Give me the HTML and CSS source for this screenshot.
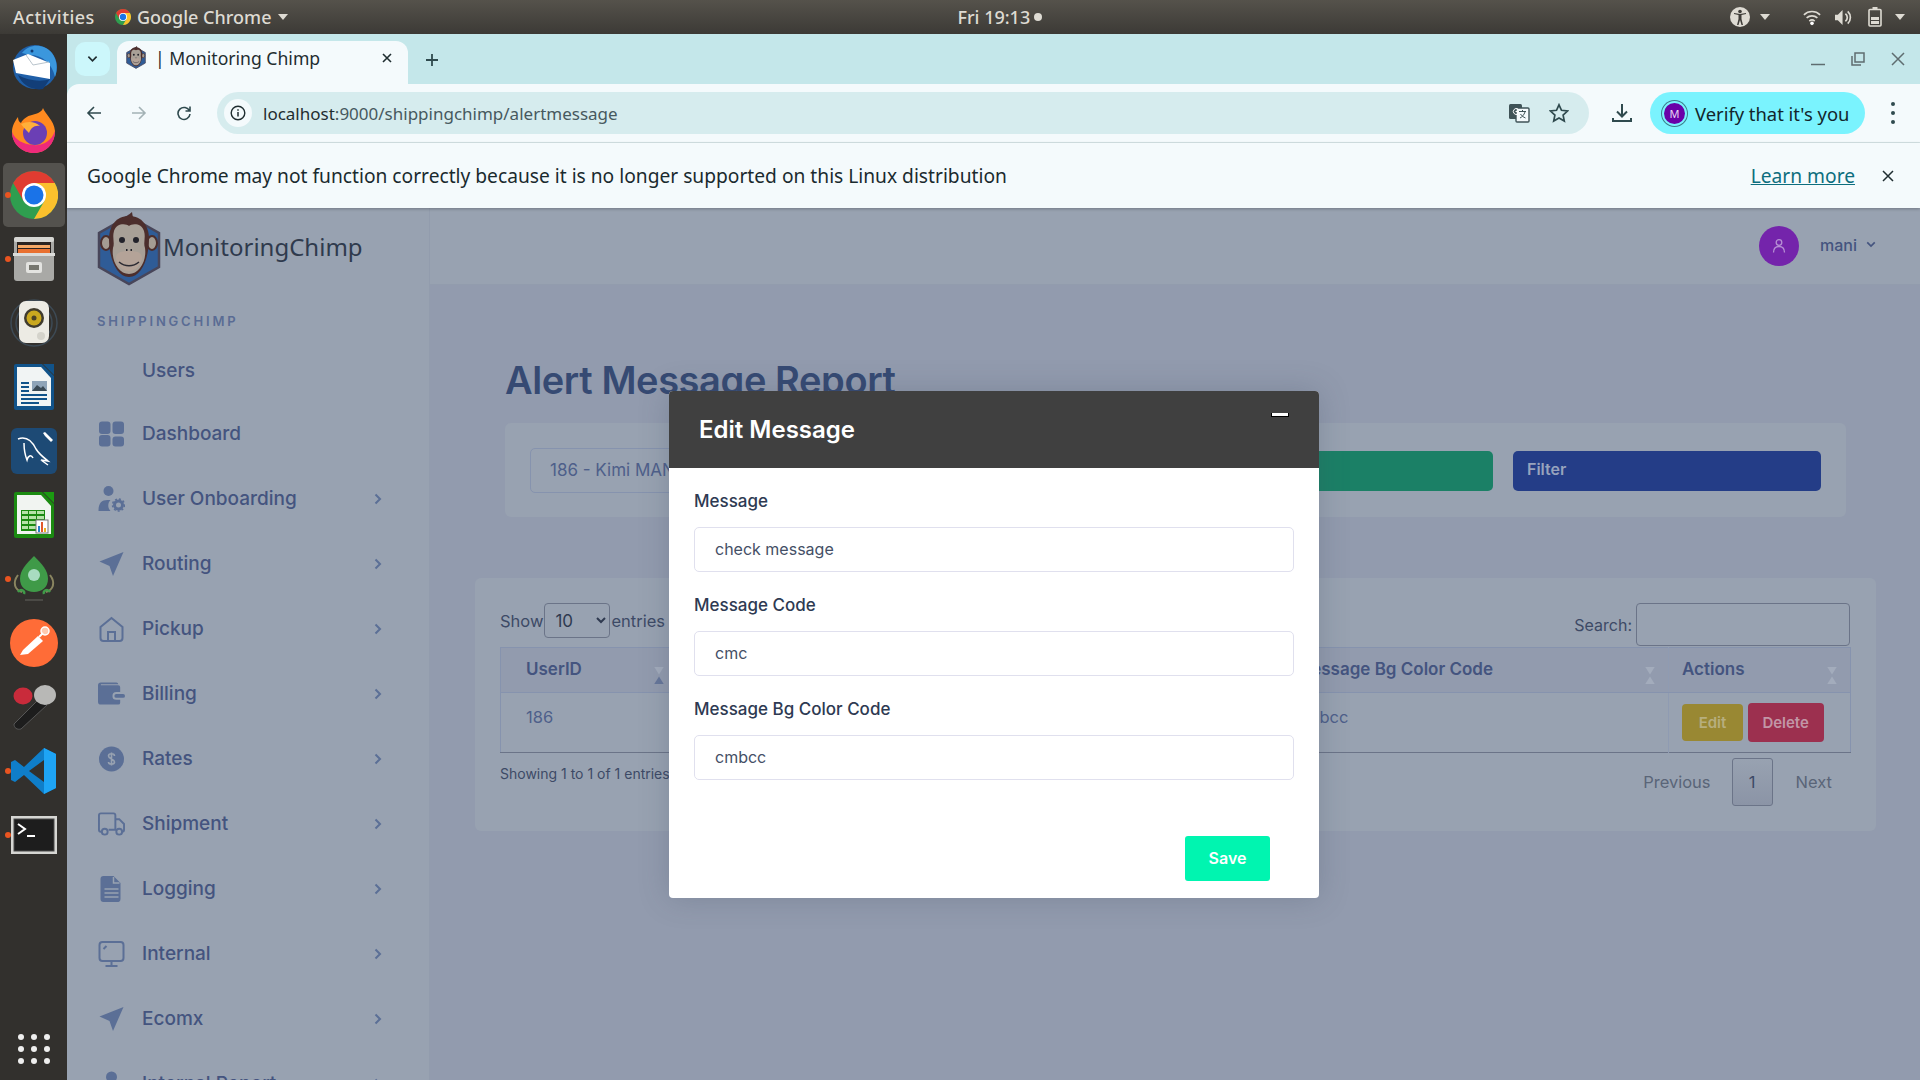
FILE: index.html
```html
<!DOCTYPE html>
<html>
	<head>
		<meta charset="UTF-8">
		<title>| Monitoring Chimp</title>
		<link rel="stylesheet" href="styles.css">
	</head>
	<body>
		<svg class="defs" width="0" height="0">
			<symbol id="chrome" viewBox="0 0 48 48">
				<circle cx="24" cy="24" r="24" fill="#2f9e4f"/>
				<path d="M24 0A24 24 0 0 1 44.8 12L24 24 13.600 30 3.200 12A24 24 0 0 1 24 0Z" fill="#e03c31"/>
				<path d="M44.800 12A24 24 0 0 1 24 48L34.400 30 24 12Z" fill="#fbc02d"/>
				<circle cx="24" cy="24" r="12" fill="#fff"/>
				<circle cx="24" cy="24" r="9.500" fill="#1a73e8"/>
			</symbol>
			<symbol id="chimp" viewBox="0 0 64 74">
				<path d="M32 4 62 21v34L32 72 2 55V21Z" fill="#2f5c97" stroke="#48465a" stroke-width="2.500"/>
				<path d="M29 5l6-5 1 6Z" fill="#4c2e2c"/>
				<ellipse cx="9" cy="31" rx="5" ry="7" fill="#a49c93" stroke="#4c2e2c" stroke-width="2"/>
				<ellipse cx="55" cy="31" rx="5" ry="7" fill="#a49c93" stroke="#4c2e2c" stroke-width="2"/>
				<path d="M32 4c13 0 20 10 20 23 0 18-7 38-20 38S12 45 12 27C12 14 19 4 32 4Z" fill="#4c2e2c"/>
				<path d="M32 14c3-3 13-3 15 5 2 7-1 11 1 17 2 13-6 26-16 26S14 49 16 36c2-6-1-10 1-17 2-8 12-8 15-5Z" fill="#a8a097"/>
				<circle cx="25" cy="28" r="3" fill="#22222a"/>
				<circle cx="39" cy="28" r="3" fill="#22222a"/>
				<path d="M19 46c0-6 6-7 13-7s13 1 13 7-6 13-13 13-13-7-13-13Z" fill="#b4a398"/>
				<path d="M22 50c6 5 14 5 20 0" fill="none" stroke="#2b2b33" stroke-width="1.500"/>
				<path d="M29 38h1.500M33.500 38H35" stroke="#22222a" stroke-width="2"/>
			</symbol>
			<symbol id="plane" viewBox="0 0 26 26">
				<path d="M25 1 1 10.500 11 15l3.500 10Z" fill="#5b6f96"/>
			</symbol>
			<symbol id="chev" viewBox="0 0 8 12">
				<path d="M1.500 1.500 6 6l-4.500 4.500" fill="none" stroke="#5b6f96" stroke-width="2"/>
			</symbol>
			<symbol id="sort" viewBox="0 0 10 18">
				<path d="M0 0h10L5 8Z" fill="#a3acbc"/>
				<path d="M0 18h10L5 10Z" fill="#a3acbc"/>
			</symbol>
			<symbol id="sortup" viewBox="0 0 10 18">
				<path d="M0 0h10L5 8Z" fill="#a3acbc"/>
				<path d="M0 18h10L5 10Z" fill="#66769a"/>
			</symbol>
			<symbol id="caret" viewBox="0 0 10 6">
				<path d="M0 0h10L5 6Z" fill="currentColor"/>
			</symbol>
		</svg>

		<div class="topbar">
			<span class="activities">Activities</span>
			<div class="app-menu">
				<svg class="app-menu-icon"><use href="#chrome"/></svg>
				<span>Google Chrome</span>
				<svg class="caret"><use href="#caret"/></svg>
			</div>
			<div class="clock">Fri 19:13<span class="clock-dot"></span></div>
			<div class="tray">
				<svg class="tray-a11y" viewBox="0 0 20 20"><circle cx="10" cy="10" r="10" fill="#dedbd3"/><circle cx="10" cy="4.500" r="1.800" fill="#3f3d39"/><path d="M4 7l4.500 1v4l-1.500 6h1.500L10 13l1.500 5H13l-1.500-6V8L16 7V6L10 7 4 6Z" fill="#3f3d39"/></svg>
				<svg class="tray-caret"><use href="#caret"/></svg>
				<svg class="tray-wifi" viewBox="0 0 20 18"><path d="M1 6a13 13 0 0 1 18 0M4 9.500a9 9 0 0 1 12 0M7 13a4.500 4.500 0 0 1 6 0" fill="none" stroke="#dedbd3" stroke-width="1.800"/><circle cx="10" cy="15.500" r="2" fill="#fff"/></svg>
				<svg class="tray-vol" viewBox="0 0 20 18"><path d="M1 6h3l5-5v16l-5-5H1Z" fill="#dedbd3"/><path d="M12 5a5 5 0 0 1 0 8M14.500 2.500a9 9 0 0 1 0 13" fill="none" stroke="#dedbd3" stroke-width="1.800"/></svg>
				<svg class="tray-bat" viewBox="0 0 14 20"><path d="M4.500 0h5v2h-5Z" fill="#dedbd3"/><rect x="1" y="2.500" width="12" height="16.500" rx="1" fill="none" stroke="#dedbd3" stroke-width="1.600"/><rect x="3" y="10" width="8" height="3" fill="#dedbd3"/><rect x="3" y="14" width="8" height="3" fill="#dedbd3"/></svg>
				<svg class="tray-caret-end"><use href="#caret"/></svg>
			</div>
		</div>

		<div class="desktop">
			<div class="dock">
				<div class="dock-item">
					<svg viewBox="0 0 48 48"><circle cx="25" cy="24" r="22" fill="#1f5fa8"/><path d="M12 10C20 0 34 1 42 10c5 7 6 16 3 24C42 20 32 12 20 12Z" fill="#3b97dd"/><path d="M3 17l15-6 22 9v16L6 30Z" fill="#fff"/><path d="M16 12l7 10 16-3" fill="none" stroke="#b9c4cc"/><path d="M8 32c10 6 24 7 32 4l-7 10c-10 2-21-4-25-14Z" fill="#123e78"/><circle cx="22" cy="8" r="1.500" fill="#123e78"/></svg>
				</div>
				<div class="dock-item">
					<svg viewBox="0 0 48 48"><path d="M33 1c2 6 11 12 12 23 0 13-10 22-21 22S2 37 2 25c0-6 3-11 6-15 0 3 1 5 3 6 2-4 6-7 11-8 4-1 10-3 11-7Z" fill="#ff8a1f"/><path d="M2 25c0 12 10 21 22 21s21-9 21-22c-4 11-13 15-22 14C13 37 5 33 2 25Z" fill="#ee2a7b"/><circle cx="25" cy="26" r="12" fill="#6b3fb5"/><path d="M11 17c6-3 14-3 19 2-6-1-9 2-11 7-3-3-6-6-8-9Z" fill="#ffb03a"/></svg>
				</div>
				<div class="dock-item is-active">
					<span class="dock-dot"></span>
					<svg viewBox="0 0 48 48"><use href="#chrome"/></svg>
				</div>
				<div class="dock-item">
					<span class="dock-dot"></span>
					<svg viewBox="0 0 48 48"><rect x="4" y="2" width="40" height="44" rx="3" fill="#a9a9a6"/><rect x="4" y="2" width="40" height="5" rx="2" fill="#d6d6d3"/><rect x="7" y="7" width="34" height="11" fill="#2a2320"/><rect x="8" y="10" width="32" height="3" fill="#f4a867"/><rect x="8" y="14" width="32" height="4" fill="#e9702f"/><rect x="3" y="18" width="42" height="3" fill="#dcdcd9"/><rect x="16" y="27" width="16" height="11" rx="2" fill="#e3e3e0"/><rect x="19" y="30" width="10" height="5" fill="#77776f"/></svg>
				</div>
				<div class="dock-item">
					<svg viewBox="0 0 48 48"><circle cx="24" cy="24" r="23" fill="none" stroke="#3d4a55" stroke-width="1.500"/><circle cx="24" cy="24" r="18" fill="none" stroke="#3d4a55" stroke-width="1.500"/><rect x="9" y="2" width="30" height="42" rx="7" fill="#ecebe4"/><circle cx="24" cy="19" r="10" fill="#3f3b2e"/><circle cx="24" cy="19" r="7.500" fill="#c9a81f"/><circle cx="24" cy="19" r="2.500" fill="#4a4226"/><circle cx="31" cy="37" r="4" fill="#d4d3cb"/></svg>
				</div>
				<div class="dock-item">
					<svg viewBox="0 0 48 48"><path d="M6 1h26l12 12v32a2 2 0 0 1-2 2H6a2 2 0 0 1-2-2V3a2 2 0 0 1 2-2Z" fill="#11538a"/><path d="M7 4h24l10 11v28H7Z" fill="#f1f4f4"/><path d="M33 1h11v11Z" fill="#11538a"/><path d="M11 19h8v2h-8ZM11 23h8v2h-8ZM11 27h8v2h-8ZM11 31h26v2H11ZM11 35h26v2H11ZM11 39h18v2H11Z" fill="#11538a"/><rect x="22" y="18" width="15" height="10" fill="#8fa4b8"/><path d="M22 28l5-6 4 3 2-2 4 5Z" fill="#3b4a55"/></svg>
				</div>
				<div class="dock-item">
					<svg viewBox="0 0 48 48"><rect x="1" y="1" width="46" height="46" rx="6" fill="#1d4a75"/><path d="M8 12c8-3 14 2 18 10 3 5 7 8 12 12l-7-1 7 5M14 16c0 6 1 12 3 17 1-4 4-6 6-2" fill="none" stroke="#fff" stroke-width="1.500"/><path d="M35 5l8 8-2 2-6-6-2-3Z" fill="#fff"/></svg>
				</div>
				<div class="dock-item">
					<svg viewBox="0 0 48 48"><path d="M6 1h26l12 12v32a2 2 0 0 1-2 2H6a2 2 0 0 1-2-2V3a2 2 0 0 1 2-2Z" fill="#1b8a11"/><path d="M7 4h24l10 11v28H7Z" fill="#f1f4f1"/><path d="M33 1h11v11Z" fill="#1b9a11"/><rect x="11" y="19" width="24" height="21" fill="#1b8a11"/><path d="M12 20h6v3h-6ZM19 20h7v3h-7ZM27 20h7v3h-7ZM12 25h6v3h-6ZM19 25h7v3h-7ZM27 25h7v3h-7ZM12 30h6v3h-6ZM19 30h7v3h-7ZM12 35h6v3h-6ZM19 35h7v3h-7Z" fill="#b6e3a8"/><rect x="26" y="29" width="12" height="13" fill="#fff" stroke="#777"/><path d="M28 35h2v6h-2Z" fill="#2a7fc9"/><path d="M31 31h2v10h-2Z" fill="#e2592a"/><path d="M34 37h2v4h-2Z" fill="#e9b21f"/></svg>
				</div>
				<div class="dock-item">
					<span class="dock-dot"></span>
					<svg viewBox="0 0 48 48"><path d="M8 20c-6 8-3 15 4 17M40 20c6 8 3 15-4 17" fill="none" stroke="#8a8560" stroke-width="2"/><path d="M24 1c8 8 14 14 14 23 0 8-6 13-14 13S10 32 10 24C10 15 16 9 24 1Z" fill="#3f9a48"/><circle cx="24" cy="20" r="6" fill="#a8dcc0"/><path d="M8 37c3-4 7-1 6 2M40 37c-3-4-7-1-6 2" fill="none" stroke="#3f9a48" stroke-width="2.500"/><path d="M15 45h18" stroke="#55534f" stroke-width="1.500"/></svg>
				</div>
				<div class="dock-item">
					<svg viewBox="0 0 48 48"><circle cx="24" cy="24" r="24" fill="#ff6c37"/><path d="M10 36l3-5 15-14 5 5-15 13Z" fill="#fff"/><circle cx="35" cy="12" r="4" fill="#ffc9b0" stroke="#fff" stroke-width="1.500"/><path d="M29 18l4-4" stroke="#fff" stroke-width="2"/></svg>
				</div>
				<div class="dock-item">
					<svg viewBox="0 0 48 48"><ellipse cx="13" cy="13" rx="9.500" ry="8.500" fill="#c92b3b"/><path d="M30 15l7 7L11 46c-4 1-7-1-7-5Z" fill="#1d1d1d" stroke="#565656"/><ellipse cx="35" cy="12" rx="11" ry="10" fill="#b8b8b6"/></svg>
				</div>
				<div class="dock-item">
					<span class="dock-dot"></span>
					<svg viewBox="0 0 48 48"><path d="M34 1l12 6v34l-12 6-20-19-9 7-4-2V15l4-2 9 7Z" fill="#0f7ec9"/><path d="M34 1l12 6v34l-12 6Z" fill="#1ea4f5"/><path d="M34 13v22L19 24Z" fill="#32302d"/></svg>
				</div>
				<div class="dock-item">
					<span class="dock-dot"></span>
					<svg viewBox="0 0 48 40"><rect x="1" y="1" width="46" height="38" fill="#d6d6d3"/><rect x="4" y="4" width="40" height="32" fill="#1d1d1d" stroke="#4b4b4b"/><path d="M8 9l7 5-7 5" fill="none" stroke="#fff" stroke-width="2"/><path d="M17 21h8" stroke="#fff" stroke-width="2"/></svg>
				</div>
				<div class="dock-grid">
					<i></i><i></i><i></i><i></i><i></i><i></i><i></i><i></i><i></i>
				</div>
			</div>

			<div class="browser">
				<div class="tabstrip">
					<div class="tab-search">
						<svg viewBox="0 0 12 8"><path d="M1.500 1.500 6 6l4.500-4.500" fill="none" stroke="#1f2d30" stroke-width="1.800"/></svg>
					</div>
					<div class="tab">
						<svg class="tab-favicon"><use href="#chimp"/></svg>
						<span class="tab-title">| Monitoring Chimp</span>
						<svg class="tab-close" viewBox="0 0 10 10"><path d="M1 1l8 8M9 1 1 9" stroke="#1f2d30" stroke-width="1.600"/></svg>
					</div>
					<svg class="tab-new" viewBox="0 0 14 14"><path d="M7 1v12M1 7h12" stroke="#2f4a4e" stroke-width="1.800"/></svg>
					<div class="window-btns">
						<svg viewBox="0 0 14 14"><path d="M0 12.500h14" stroke="#5f6d70" stroke-width="1.500"/></svg>
						<svg viewBox="0 0 14 14"><path d="M4 1h9v9H4ZM1 4v9h9" fill="none" stroke="#5f6d70" stroke-width="1.500"/></svg>
						<svg viewBox="0 0 14 14"><path d="M1 1l12 12M13 1 1 13" stroke="#5f6d70" stroke-width="1.500"/></svg>
					</div>
				</div>

				<div class="toolbar">
					<svg class="tool-btn" viewBox="0 0 16 16"><path d="M15 8H2M8 2 2 8l6 6" fill="none" stroke="#2f4a4e" stroke-width="1.600"/></svg>
					<svg class="tool-btn" viewBox="0 0 16 16"><path d="M1 8h13M8 2l6 6-6 6" fill="none" stroke="#a3b2b5" stroke-width="1.600"/></svg>
					<svg class="tool-btn" viewBox="0 0 16 16"><path d="M13.500 6A6 6 0 1 0 14 9M14 1.500V6H9.500" fill="none" stroke="#2f4a4e" stroke-width="1.600"/></svg>
					<div class="omnibox">
						<div class="omni-info">
							<svg viewBox="0 0 16 16"><circle cx="8" cy="8" r="6.800" fill="none" stroke="#1f2d30" stroke-width="1.400"/><path d="M8 7v4.500M8 4.200v1.500" stroke="#1f2d30" stroke-width="1.500"/></svg>
						</div>
						<div class="url"><span class="url-host">localhost</span>:9000/shippingchimp/alertmessage</div>
						<svg class="omni-translate" viewBox="0 0 22 20"><rect x="1" y="1" width="13" height="15" rx="1.500" fill="#3f5357"/><rect x="8" y="5" width="13" height="14" rx="1" fill="#f4fafc" stroke="#3f5357" stroke-width="1.400"/><path d="M11 8.500h7M14.500 7v1.500M17 9c-1 3-3 5-5 6M12.500 11c1 2 3 3 5 4" fill="none" stroke="#3f5357"/><path d="M10 6a3 3 0 1 0 0 5V8.500H7.500" fill="none" stroke="#fff"/></svg>
						<svg class="omni-star" viewBox="0 0 20 20"><path d="M10 1.800l2.500 5.500 6 .7-4.400 4.100 1.200 5.900-5.300-3-5.300 3 1.200-5.900L1.500 8l6-.7Z" fill="none" stroke="#2f4a4e" stroke-width="1.700"/></svg>
					</div>
					<svg class="tool-download" viewBox="0 0 20 20"><path d="M10 1v12M5 8.500l5 5 5-5" fill="none" stroke="#2f4a4e" stroke-width="2"/><path d="M1 15v3h18v-3" fill="none" stroke="#2f4a4e" stroke-width="2"/></svg>
					<div class="verify">
						<span class="verify-avatar">M</span>
						<span>Verify that it's you</span>
					</div>
					<div class="tool-menu"><i></i><i></i><i></i></div>
				</div>

				<div class="infobar">
					<span class="infobar-text">Google Chrome may not function correctly because it is no longer supported on this Linux distribution</span>
					<a class="infobar-link" href="#">Learn more</a>
					<svg class="infobar-close" viewBox="0 0 12 12"><path d="M1 1l10 10M11 1 1 11" stroke="#1f2d30" stroke-width="1.500"/></svg>
				</div>

				<div class="app">
					<aside class="sidebar">
						<div class="brand">
							<svg class="brand-logo"><use href="#chimp"/></svg>
							<span class="brand-name">MonitoringChimp</span>
						</div>
						<div class="nav-title">SHIPPINGCHIMP</div>
						<ul class="nav">
							<li class="nav-first"><span class="nav-icon"></span>Users</li>
							<li>
								<svg class="nav-icon" viewBox="0 0 26 26"><rect x="0.500" y="0.500" width="11.500" height="12.500" rx="3" fill="#5b6f96"/><rect x="14" y="0.500" width="11.500" height="12.500" rx="3" fill="#5b6f96"/><rect x="0.500" y="14" width="11.500" height="11.500" rx="3" fill="#5b6f96"/><rect x="14" y="15.500" width="11.500" height="10" rx="3" fill="#5b6f96"/></svg>
								Dashboard
							</li>
							<li>
								<svg class="nav-icon" viewBox="0 0 26 26"><circle cx="10" cy="5" r="5" fill="#5b6f96"/><path d="M0 25c0-8 3-11 9-11h3c-3 3-3 8 0 11Z" fill="#5b6f96"/><circle cx="20" cy="19" r="4" fill="none" stroke="#5b6f96" stroke-width="3"/><circle cx="20" cy="19" r="6" fill="none" stroke="#5b6f96" stroke-width="1.500" stroke-dasharray="2 2"/></svg>
								User Onboarding
								<svg class="nav-chev"><use href="#chev"/></svg>
							</li>
							<li>
								<svg class="nav-icon"><use href="#plane"/></svg>
								Routing
								<svg class="nav-chev"><use href="#chev"/></svg>
							</li>
							<li>
								<svg class="nav-icon" viewBox="0 0 26 26"><path d="M2 11 13 2l11 9v11a3 3 0 0 1-3 3H5a3 3 0 0 1-3-3Z" fill="none" stroke="#5b6f96" stroke-width="2"/><path d="M9.500 25v-9h7v9" fill="none" stroke="#5b6f96" stroke-width="2"/></svg>
								Pickup
								<svg class="nav-chev"><use href="#chev"/></svg>
							</li>
							<li>
								<svg class="nav-icon" viewBox="0 0 28 24"><path d="M3 0h16a2 2 0 0 1 2 2H3v1h18a2 2 0 0 1 2 2v5h-4a4 4 0 0 0 0 8h4v3a2 2 0 0 1-2 2H3a3 3 0 0 1-3-3V3a3 3 0 0 1 3-3Z" fill="#5b6f96"/><rect x="17" y="12" width="11" height="4" rx="2" fill="#5b6f96"/></svg>
								Billing
								<svg class="nav-chev"><use href="#chev"/></svg>
							</li>
							<li>
								<svg class="nav-icon" viewBox="0 0 26 26"><circle cx="13" cy="13" r="12.500" fill="#5b6f96"/><path d="M16 10c0-3-6-3-6 0s6 3 6 6-6 3-6 0M13 6.500v13" fill="none" stroke="#98a2b1" stroke-width="1.600"/></svg>
								Rates
								<svg class="nav-chev"><use href="#chev"/></svg>
							</li>
							<li>
								<svg class="nav-icon" viewBox="0 0 28 24"><path d="M4 20H3a2 2 0 0 1-2-2V3a2 2 0 0 1 2-2h13a2 2 0 0 1 2 2v15h-7M18 7h4l5 5v6a2 2 0 0 1-2 2" fill="none" stroke="#5b6f96" stroke-width="2"/><circle cx="7" cy="20" r="3" fill="none" stroke="#5b6f96" stroke-width="2"/><circle cx="22" cy="20" r="3" fill="none" stroke="#5b6f96" stroke-width="2"/></svg>
								Shipment
								<svg class="nav-chev"><use href="#chev"/></svg>
							</li>
							<li>
								<svg class="nav-icon" viewBox="0 0 26 26"><path d="M6 0h9l7 7v16a3 3 0 0 1-2 3H5a3 3 0 0 1-3-3V3a3 3 0 0 1 3-3Z" fill="#5b6f96"/><path d="M15 1v6h6M6 13h14M6 17h14M6 21h14" fill="none" stroke="#98a2b1" stroke-width="1.500"/></svg>
								Logging
								<svg class="nav-chev"><use href="#chev"/></svg>
							</li>
							<li>
								<svg class="nav-icon" viewBox="0 0 26 26"><rect x="1" y="1" width="24" height="19" rx="3" fill="none" stroke="#5b6f96" stroke-width="2"/><path d="M13 20v4M7 25h12M5 8l3-3" fill="none" stroke="#5b6f96" stroke-width="2"/></svg>
								Internal
								<svg class="nav-chev"><use href="#chev"/></svg>
							</li>
							<li>
								<svg class="nav-icon"><use href="#plane"/></svg>
								Ecomx
								<svg class="nav-chev"><use href="#chev"/></svg>
							</li>
							<li>
								<svg class="nav-icon" viewBox="0 0 26 26"><circle cx="13" cy="6" r="5.500" fill="#5b6f96"/><path d="M3 25c0-8 4-11 10-11s10 3 10 11Z" fill="#5b6f96"/></svg>
								Internal Report
								<svg class="nav-chev"><use href="#chev"/></svg>
							</li>
						</ul>
					</aside>

					<div class="content">
						<div class="app-header">
							<div class="avatar">
								<svg viewBox="0 0 14 16"><circle cx="7" cy="4.500" r="2.800" fill="none" stroke="#b68fd4" stroke-width="1.300"/><path d="M1.500 14.500c0-4 2-6 5.500-6s5.500 2 5.500 6" fill="none" stroke="#b68fd4" stroke-width="1.300"/></svg>
							</div>
							<span class="user-name">mani</span>
							<svg class="user-chev" viewBox="0 0 12 8"><path d="M1.500 1.500 6 6l4.500-4.500" fill="none" stroke="#44547f" stroke-width="2"/></svg>
						</div>

						<h1 class="page-title">Alert Message Report</h1>

						<div class="filter-card">
							<div class="filter-select">186 - Kimi MANUFACTURING</div>
							<div class="filter-green"></div>
							<div class="filter-btn">Filter</div>
						</div>

						<div class="table-card">
							<div class="table-top">
								<div class="show">
									Show
									<select class="show-select"><option>10</option></select>
									entries
								</div>
								<div class="search">
									Search:
									<input class="search-input" type="text">
								</div>
							</div>
							<table class="report">
								<thead>
									<tr>
										<th class="col-id">UserID<svg class="sort"><use href="#sortup"/></svg></th>
										<th class="col-msg">Message<svg class="sort"><use href="#sort"/></svg></th>
										<th class="col-code">Message Code<svg class="sort"><use href="#sort"/></svg></th>
										<th class="col-bg">Message Bg Color Code<svg class="sort"><use href="#sort"/></svg></th>
										<th class="col-act">Actions<svg class="sort"><use href="#sort"/></svg></th>
									</tr>
								</thead>
								<tbody>
									<tr>
										<td>186</td>
										<td>check message</td>
										<td>cmc</td>
										<td>cmbcc</td>
										<td class="cell-act">
											<span class="btn-edit">Edit</span>
											<span class="btn-delete">Delete</span>
										</td>
									</tr>
								</tbody>
							</table>
							<div class="table-bottom">
								<span class="table-info">Showing 1 to 1 of 1 entries</span>
								<div class="pager">
									<span>Previous</span>
									<span class="pager-current">1</span>
									<span>Next</span>
								</div>
							</div>
						</div>
					</div>
				</div>
			</div>
		</div>

		<div class="modal">
			<div class="modal-head">
				<span class="modal-title">Edit Message</span>
				<span class="modal-min"></span>
			</div>
			<div class="modal-body">
				<label class="field-label">Message</label>
				<input class="field-input" type="text" value="check message">
				<label class="field-label">Message Code</label>
				<input class="field-input" type="text" value="cmc">
				<label class="field-label">Message Bg Color Code</label>
				<input class="field-input" type="text" value="cmbcc">
				<div class="modal-foot">
					<button class="btn-save">Save</button>
				</div>
			</div>
		</div>
	</body>
</html>
```

FILE: styles.css
```css
*{
	margin: 0;
	padding: 0;
	box-sizing: border-box;
}
html, body{
	width: 1920px;
	height: 1080px;
	overflow: hidden;
}
body{
	font-family: "Inter", "Liberation Sans", sans-serif;
	background: #929bae;
}
.defs{
	position: absolute;
}
ul{
	list-style: none;
}

/* ubuntu top bar */
.topbar{
	height: 34px;
	display: flex;
	align-items: center;
	background: linear-gradient(#55524b, #3c3a36);
	color: #dedbd3;
	font-family: "Noto Sans", sans-serif;
	font-size: 18px;
	font-weight: 500;
	padding-left: 13px;
}
.activities{
	width: 102px;
	letter-spacing: 0.400px;
}
.app-menu{
	display: flex;
	align-items: center;
}
.app-menu-icon{
	width: 16px;
	height: 16px;
	margin-right: 6px;
}
.caret{
	width: 10px;
	height: 6px;
	margin-left: 7px;
	color: #dedbd3;
}
.clock{
	width: 90px;
	margin-left: 669px;
	display: flex;
	align-items: center;
	white-space: nowrap;
}
.clock-dot{
	width: 8px;
	height: 8px;
	border-radius: 50%;
	background: #dedbd3;
	margin-left: 4px;
}
.tray{
	margin-left: auto;
	display: flex;
	align-items: center;
	padding-right: 15px;
}
.tray-a11y{
	width: 20px;
	height: 20px;
}
.tray-caret{
	width: 10px;
	height: 6px;
	color: #dedbd3;
	margin-left: 10px;
}
.tray-caret-end{
	width: 10px;
	height: 6px;
	color: #dedbd3;
	margin-left: 12px;
}
.tray-wifi{
	width: 18px;
	height: 17px;
	margin-left: 33px;
}
.tray-vol{
	width: 19px;
	height: 17px;
	margin-left: 13px;
}
.tray-bat{
	width: 16px;
	height: 20px;
	margin-left: 14px;
}

.desktop{
	height: 1046px;
	display: flex;
}

/* dock */
.dock{
	width: 67px;
	flex: none;
	background: #32302d;
	display: flex;
	flex-direction: column;
	align-items: center;
	padding-top: 1px;
}
.dock-item{
	width: 62px;
	height: 64px;
	display: flex;
	align-items: center;
	justify-content: center;
	position: relative;
	border-radius: 5px;
}
.dock-item svg{
	width: 48px;
	height: 48px;
}
.dock-item.is-active{
	background: #54524e;
}
.dock-dot{
	position: absolute;
	left: 2px;
	top: 50%;
	width: 6px;
	height: 6px;
	margin-top: -3px;
	border-radius: 50%;
	background: #e95420;
}
.dock-grid{
	margin-top: auto;
	margin-bottom: 16px;
	width: 32px;
	display: grid;
	grid-template-columns: repeat(3, 6px);
	grid-gap: 6px;
	justify-content: space-between;
}
.dock-grid i{
	width: 6px;
	height: 6px;
	border-radius: 50%;
	background: #eee;
}

/* chrome */
.browser{
	flex: 1;
	display: flex;
	flex-direction: column;
	min-width: 0;
	background: #c4e7ea;
	font-family: "Noto Sans", sans-serif;
}
.tabstrip{
	height: 50px;
	display: flex;
	align-items: flex-end;
	padding-left: 8px;
}
.tab-search{
	width: 35px;
	height: 34px;
	margin-bottom: 8px;
	border-radius: 10px;
	background: #ccf7fb;
	display: flex;
	align-items: center;
	justify-content: center;
}
.tab-search svg{
	width: 11px;
	height: 8px;
}
.tab{
	width: 291px;
	height: 43px;
	margin-left: 7px;
	background: #f4fafc;
	border-radius: 12px 12px 0 0;
	display: flex;
	align-items: center;
	padding: 0 16px 10px 9px;
	font-size: 17.600px;
	color: #1f2d30;
}
.tab-favicon{
	width: 20px;
	height: 23px;
}
.tab-title{
	margin-left: 9px;
}
.tab-close{
	width: 10px;
	height: 10px;
	margin-left: auto;
}
.tab-new{
	width: 14px;
	height: 14px;
	margin: 0 0 17px 17px;
}
.window-btns{
	margin-left: auto;
	display: flex;
	align-items: center;
	margin-bottom: 18px;
	padding-right: 15px;
}
.window-btns svg{
	width: 14px;
	height: 14px;
	margin-left: 26px;
}
.toolbar{
	height: 59px;
	background: #f4fafc;
	border-radius: 12px 0 0 0;
	border-bottom: 1px solid #d6e4e6;
	display: flex;
	align-items: center;
	padding-left: 19px;
	color: #1f2d30;
}
.tool-btn{
	width: 16px;
	height: 16px;
	margin-right: 29px;
}
.omnibox{
	width: 1372px;
	height: 42px;
	margin-left: -4px;
	background: #d6ecee;
	border-radius: 21px;
	display: flex;
	align-items: center;
	padding: 0 20px 0 7px;
}
.omni-info{
	width: 28px;
	height: 28px;
	border-radius: 50%;
	background: #f4fafc;
	display: flex;
	align-items: center;
	justify-content: center;
}
.omni-info svg{
	width: 16px;
	height: 16px;
}
.url{
	margin-left: 11px;
	font-size: 17px;
	color: #47595e;
}
.url-host{
	color: #1f2d30;
}
.omni-translate{
	width: 22px;
	height: 20px;
	margin-left: auto;
}
.omni-star{
	width: 20px;
	height: 20px;
	margin-left: 19px;
}
.tool-download{
	width: 20px;
	height: 20px;
	margin-left: 23px;
}
.verify{
	width: 215px;
	height: 42px;
	margin-left: 18px;
	background: #7af3fe;
	border-radius: 21px;
	display: flex;
	align-items: center;
	padding-left: 14px;
	font-size: 18.400px;
	color: #12262b;
}
.verify-avatar{
	width: 21px;
	height: 21px;
	border-radius: 50%;
	background: #6a00a8;
	color: #e8d5f2;
	font-size: 11px;
	display: flex;
	align-items: center;
	justify-content: center;
	margin-right: 10px;
	box-shadow: 0 0 0 2px #7af3fe, 0 0 0 3px #3b7f8c;
}
.tool-menu{
	margin-left: 26px;
	display: flex;
	flex-direction: column;
	gap: 5px;
}
.tool-menu i{
	width: 4px;
	height: 4px;
	border-radius: 50%;
	background: #2f4a4e;
}
.infobar{
	height: 65px;
	background: #f4fafc;
	box-shadow: 0 1px 3px rgba(0, 0, 0, 0.25);
	display: flex;
	align-items: center;
	padding: 0 26px 0 20px;
	font-size: 19.200px;
	color: #1a2a2e;
	position: relative;
	z-index: 1;
}
.infobar-link{
	margin-left: auto;
	color: #0d6e7e;
}
.infobar-close{
	width: 12px;
	height: 12px;
	margin-left: 27px;
}

/* app under the dialog */
.app{
	flex: 1;
	display: flex;
	min-height: 0;
	overflow: hidden;
	background: #929bae;
	font-family: "Inter", "Liberation Sans", sans-serif;
}
.sidebar{
	width: 363px;
	flex: none;
	background: #98a2b1;
	border-right: 1px solid #929cad;
}
.brand{
	height: 77px;
	display: flex;
	align-items: center;
	padding-left: 30px;
}
.brand-logo{
	width: 64px;
	height: 74px;
	margin-top: 4px;
}
.brand-name{
	font-family: "Noto Sans", sans-serif;
	font-size: 24px;
	color: #2f3a4d;
	margin-left: 2px;
}
.nav-title{
	margin: 24px 0 7px 30px;
	height: 24px;
	line-height: 24px;
	font-size: 13px;
	font-weight: 600;
	letter-spacing: 2.800px;
	color: #5a6c94;
}
.nav li{
	height: 65px;
	display: flex;
	align-items: center;
	padding: 0 47px 0 31px;
	font-size: 19px;
	font-weight: 500;
	color: #44547f;
}
.nav li.nav-first{
	height: 61px;
}
.nav-icon{
	width: 27px;
	height: 26px;
	margin-right: 17px;
	flex: none;
}
.nav-chev{
	width: 8px;
	height: 12px;
	margin-left: auto;
}
.content{
	flex: 1;
	min-width: 0;
}
.app-header{
	height: 77px;
	background: #98a2b1;
	border-bottom: 1px solid #929cad;
	display: flex;
	align-items: center;
	padding-right: 44px;
	justify-content: flex-end;
	color: #44547f;
}
.avatar{
	width: 40px;
	height: 40px;
	border-radius: 50%;
	background: #7424ab;
	display: flex;
	align-items: center;
	justify-content: center;
}
.avatar svg{
	width: 14px;
	height: 16px;
}
.user-name{
	margin: 0 0 3px 21px;
	font-size: 16px;
	font-weight: 500;
}
.user-chev{
	width: 10px;
	height: 7px;
	margin: 0 0 3px 9px;
}
.page-title{
	margin: 56px 0 0 75px;
	height: 78px;
	line-height: 78px;
	font-size: 38px;
	font-weight: 600;
	letter-spacing: -0.400px;
	color: #364a73;
}
.filter-card{
	width: 1341px;
	height: 94px;
	margin: 4px 0 0 75px;
	padding: 25px 25px 0 25px;
	background: #98a2b1;
	border-radius: 6px;
	display: flex;
	align-items: flex-start;
}
.filter-select{
	width: 405px;
	height: 45px;
	line-height: 43px;
	padding-left: 19px;
	border: 1px solid #8693ae;
	border-radius: 5px;
	font-size: 17px;
	color: #4e5f8a;
	white-space: nowrap;
	overflow: hidden;
}
.filter-green{
	width: 533px;
	height: 40px;
	margin: 3px 0 0 25px;
	background: #1b8066;
	border-radius: 5px;
}
.filter-btn{
	width: 308px;
	height: 40px;
	margin: 3px 0 0 20px;
	padding-left: 14px;
	line-height: 36px;
	background: #243d87;
	border-radius: 5px;
	color: #97a3bd;
	font-size: 16px;
	font-weight: 600;
}
.table-card{
	width: 1401px;
	height: 253px;
	margin: 61px 0 0 45px;
	padding: 25px 26px 0 25px;
	background: #98a2b1;
	border-radius: 6px;
	color: #3d4a66;
	font-size: 16px;
}
.table-top{
	height: 44px;
	display: flex;
	justify-content: space-between;
	align-items: flex-start;
}
.show{
	height: 35px;
	display: flex;
	align-items: center;
	gap: 1px;
	font-size: 16.500px;
}
.show-select{
	width: 66px;
	height: 35px;
	padding-left: 6px;
	border: 1px solid #6b7488;
	border-radius: 4px;
	background: #98a2b1;
	color: #2f3a50;
	font-size: 17px;
	font-family: inherit;
}
.search{
	display: flex;
	align-items: center;
	gap: 4px;
}
.search-input{
	width: 214px;
	height: 43px;
	border: 1px solid #6b7488;
	border-radius: 4px;
	background: transparent;
}
.report{
	width: 1350px;
	table-layout: fixed;
	border-collapse: collapse;
	border-bottom: 1px solid #6b7488;
	border-left: 1px solid #8693ae;
	border-right: 1px solid #8693ae;
}
.report th{
	height: 45px;
	text-align: left;
	padding: 0 0 3px 25px;
	font-weight: 600;
	font-size: 17px;
	color: #44547f;
	background: #929bae;
	border-top: 1px solid #8693ae;
	border-bottom: 1px solid #8693ae;
	position: relative;
}
.report th.col-act{
	padding-left: 13px;
}
.col-id{
	width: 176px;
}
.col-msg{
	width: 290px;
}
.col-code{
	width: 304px;
}
.col-bg{
	width: 398px;
	border-right: 1px solid #8f9bb2;
}
.col-act{
	width: 182px;
}
.report td{
	height: 60px;
	padding: 0 0 12px 25px;
	color: #4e5f8a;
	font-size: 16.500px;
}
.report td.cell-act{
	padding: 0 0 0 13px;
	border-left: 1px solid #8f9bb2;
	white-space: nowrap;
}
.sort{
	position: absolute;
	right: 13px;
	top: 19px;
	width: 10px;
	height: 17px;
}
.btn-edit, .btn-delete{
	display: inline-block;
	height: 37px;
	line-height: 37px;
	text-align: center;
	border-radius: 4px;
	font-size: 15px;
	font-weight: 600;
	vertical-align: middle;
}
.btn-edit{
	width: 61px;
	background: #998833;
	color: #b7ae7e;
}
.btn-delete{
	width: 76px;
	height: 39px;
	line-height: 39px;
	background: #9c304f;
	color: #c296a6;
}
.table-bottom{
	display: flex;
	justify-content: space-between;
	align-items: flex-start;
	padding-top: 5px;
}
.table-info{
	margin-top: 7px;
	font-size: 14px;
}
.pager{
	display: flex;
	align-items: center;
	padding-right: 18px;
	color: #5a6578;
	font-size: 16.500px;
}
.pager-current{
	width: 41px;
	height: 48px;
	line-height: 46px;
	margin: 0 23px 0 21px;
	text-align: center;
	color: #3d4a66;
	border: 1px solid #6b7488;
	border-radius: 3px;
	background: linear-gradient(#98a2b1, #8b94a6);
}

/* dialog */
.modal{
	position: absolute;
	left: 669px;
	top: 391px;
	width: 650px;
	height: 507px;
	background: #fff;
	border-radius: 4px;
	overflow: hidden;
	box-shadow: 0 0 30px rgba(60, 70, 90, 0.25);
}
.modal-head{
	height: 77px;
	background: #404040;
	display: flex;
	padding: 0 30px;
	align-items: center;
	position: relative;
}
.modal-title{
	font-size: 24px;
	font-weight: 600;
	color: #fff;
}
.modal-min{
	position: absolute;
	right: 30px;
	top: 22px;
	width: 18px;
	height: 3px;
	background: #fff;
	border-left: 1px solid #000;
	border-right: 1px solid #000;
	box-shadow: 0 1px 0 #000;
}
.modal-body{
	padding: 21px 25px 0 25px;
}
.field-label{
	display: block;
	height: 25px;
	line-height: 25px;
	margin-bottom: 13px;
	font-size: 17px;
	font-weight: 500;
	color: #2e3a52;
}
.field-input{
	display: block;
	width: 600px;
	height: 45px;
	margin-bottom: 21px;
	padding: 0 0 2px 20px;
	border: 1px solid #e0e0ee;
	border-radius: 5px;
	font-family: inherit;
	font-size: 16px;
	color: #444f66;
	outline: none;
}
.modal-foot{
	display: flex;
	justify-content: flex-end;
	padding: 35px 24px 0 0;
}
.btn-save{
	width: 85px;
	height: 45px;
	padding-bottom: 2px;
	border: none;
	border-radius: 3px;
	background: #00f5b0;
	color: #fff;
	font-family: inherit;
	font-size: 16px;
	font-weight: 600;
}
```
